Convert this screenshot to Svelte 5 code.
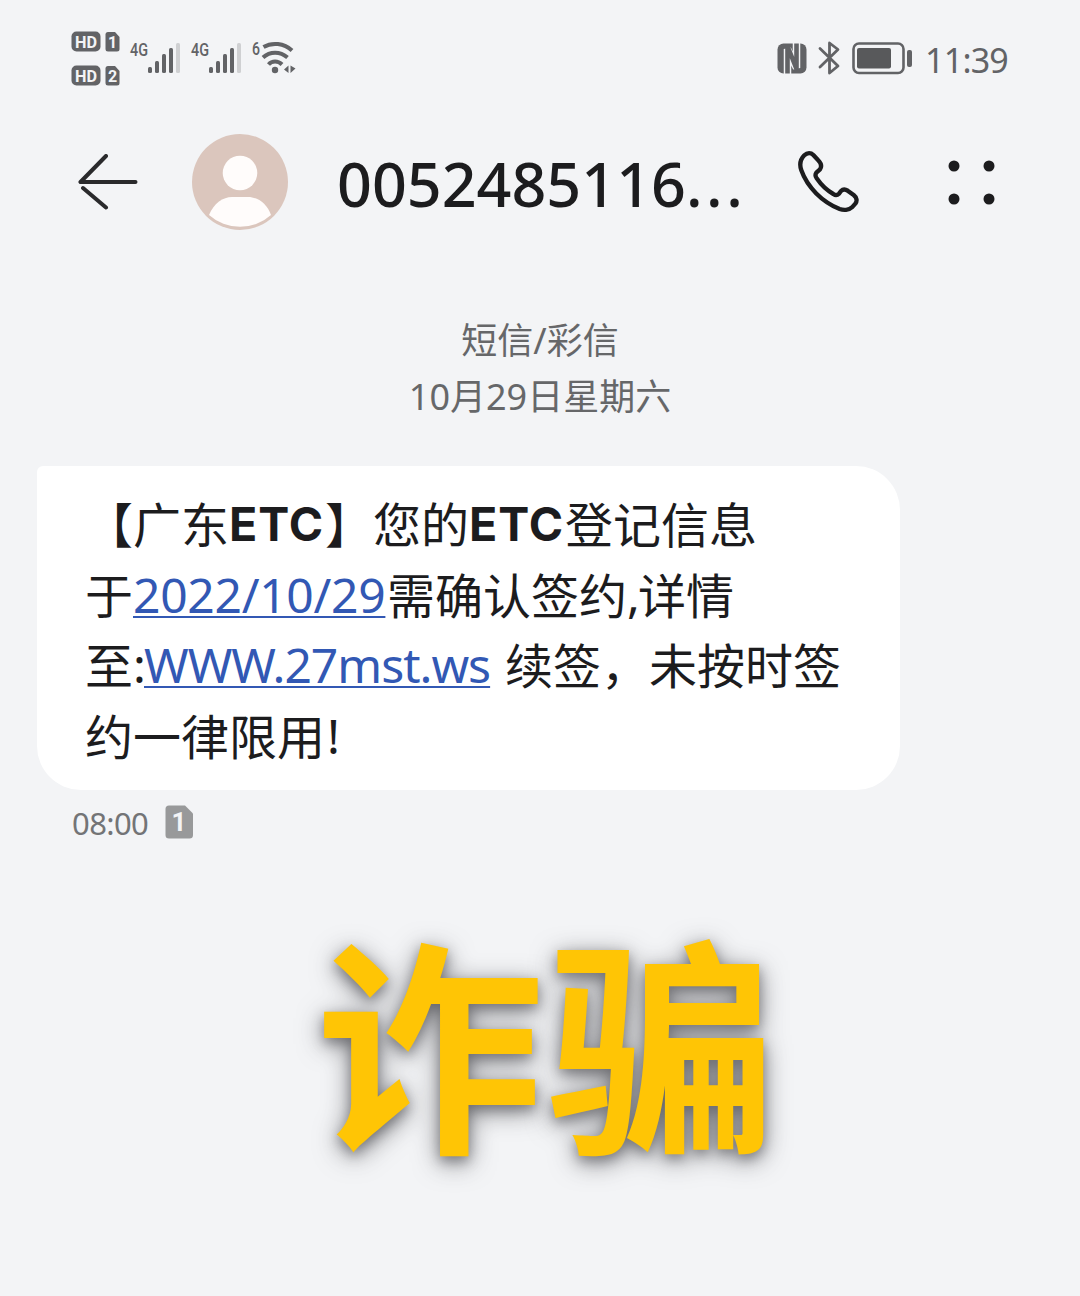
<script>
	// SIGNAL BARS, LAST ONE IS THE EMPTY LEVEL
	let bars = [
		{x: 18, h: 6}, {x: 25, h: 12}, {x: 32, h: 19},
		{x: 39, h: 25}, {x: 46, h: 30},
	]
	let sims = [1, 2];
	let dots = [
		{x: 6, y: 6}, {x: 41, y: 6},
		{x: 6, y: 39}, {x: 41, y: 39},
	]

	// MESSAGE IS SPLIT INTO LINES, EACH LINE INTO RUNS
	let lines = [
		[
			{kind: "han", text: "【广东"}, {kind: "strong", text: "ETC"},
			{kind: "han", text: "】您的"}, {kind: "strong", text: "ETC"},
			{kind: "han", text: "登记信息"},
		],
		[
			{kind: "han", text: "于"}, {kind: "date", text: "2022/10/29"},
			{kind: "han", text: "需确认签约"}, {kind: "mark", text: ","},
			{kind: "han", text: "详情"},
		],
		[
			{kind: "han", text: "至"}, {kind: "mark", text: ":"},
			{kind: "site", text: "WWW.27mst.ws"},
			{kind: "han after", text: "续签，未按时签"},
		],
		[
			{kind: "han", text: "约一律限用"}, {kind: "mark bang", text: "!"},
		],
	]
</script>

<main>
	<div class="status">
		<div class="hd">
			{#each sims as sim}
				<svg width="49" height="21" viewBox="0 0 49 21">
					<rect x="0.5" y="0.5" width="29" height="20" rx="5" fill="#626366" />
					<text class="hd-text" x="15" y="16.5" textLength="22" lengthAdjust="spacingAndGlyphs">HD</text>
					<path d="M37 1H44L48.5 6V18Q48.500 20.500 46 20.500H37Q34.500 20.500 34.500 18V3.500Q34.500 1 37 1Z" fill="#626366" />
					<text class="hd-text" x="41.500" y="16.500">{sim}</text>
				</svg>
			{/each}
		</div>
		{#each sims as sim}
			<svg class="signal" width="55" height="43" viewBox="-4 -9 55 43">
				<text class="net" x="0" y="16" textLength="18" lengthAdjust="spacingAndGlyphs">4G</text>
				{#each bars as bar, index}
					<rect x={bar.x} y={33 - bar.h} width="4" height={bar.h} rx="1.5" fill={index === 4 ? '#cfd0d2' : '#626366'} />
				{/each}
			</svg>
		{/each}
		<svg class="signal" width="50" height="43" viewBox="-4 -9 50 43">
			<text class="net" x="0" y="15" textLength="8" lengthAdjust="spacingAndGlyphs">6</text>
			<g fill="none" stroke="#626366" stroke-width="4">
				<path d="M11.500 7C20 2 32 3 40 10.500" />
				<path d="M11 17.500C18 11 28 11 35.500 17.500" />
				<path d="M16.500 24.500C20 20.500 26 20.500 30 24.500" />
			</g>
			<circle cx="23" cy="30" r="3.200" fill="#626366" />
			<path d="M36.500 25.500V33L32 29.500ZM38.500 25.500V33L43.500 28.500Z" fill="#626366" />
		</svg>
		<div class="right">
			<svg width="30" height="31" viewBox="0 0 30 31">
				<rect x="0.500" y="0.500" width="29" height="30" rx="6" fill="#626366" />
				<path d="M10.500 32V6L19.500 25V-1" fill="none" stroke="#f3f4f6" stroke-width="7.500" />
				<path d="M10.500 30.500V3L19.500 26V0.500" fill="none" stroke="#626366" stroke-width="4.600" />
			</svg>
			<svg class="bt" width="22" height="34" viewBox="0 0 22 34">
				<path d="M2 7.500L20 25L11.500 32V2L20 8.500L2 26" fill="none" stroke="#626366" stroke-width="2.800" stroke-linejoin="round" stroke-linecap="round" />
			</svg>
			<svg class="battery" width="60" height="33" viewBox="0 0 60 33">
				<rect x="1.500" y="1.500" width="50" height="29.500" rx="5.500" fill="none" stroke="#626366" stroke-width="2.600" />
				<rect x="5" y="6" width="34" height="20.500" rx="2" fill="#58595b" />
				<rect x="55" y="8" width="5" height="17" rx="2" fill="#626366" />
			</svg>
			<span class="clock">11:39</span>
		</div>
	</div>

	<header>
		<svg class="back" width="60" height="56" viewBox="0 0 60 56">
			<path d="M28 2L2.500 28H57.500M5 34L28 53.500" fill="none" stroke="#2a2a2c" stroke-width="4" stroke-linejoin="round" stroke-linecap="round" />
		</svg>
		<svg class="avatar" width="96" height="96" viewBox="0 0 96 96">
			<circle cx="48" cy="48" r="48" fill="#dbc6bd" />
			<circle cx="48" cy="39" r="17.300" fill="#fffcfb" />
			<path d="M17 81C22 69 31 63 40 63H56C66 63 75 70 79 81A46.500 46.500 0 0 1 17 81Z" fill="#fffcfb" />
		</svg>
		<h1>0052485116<span>...</span></h1>
		<svg width="64" height="64" viewBox="410 90 192 192">
			<path d="M432 106C441 97 452 98 459 105L473 120C483 130 485 139 479 148L468 158C464 164 464 168 469 175C482 194 499 211 519 222C526 227 531 226 536 221L542 213C548 207 556 208 562 212L580 225C590 233 591 243 585 251L575 262C566 271 549 271 538 267C486 246 441 202 423 151C417 134 420 118 432 106Z" fill="none" stroke="#1c1c1e" stroke-width="13" stroke-linejoin="round" />
		</svg>
		<svg class="more" width="47" height="45" viewBox="0 0 47 45">
			{#each dots as dot}
				<circle cx={dot.x} cy={dot.y} r="5.500" fill="#1c1c1e" />
			{/each}
		</svg>
	</header>

	<div class="day">
		<p>短信/彩信</p>
		<p>10月29日星期六</p>
	</div>

	<div class="bubble">
		{#each lines as line}
			<div class="line">
				{#each line as run}<span class={run.kind}>{run.text}</span>{/each}
			</div>
		{/each}
	</div>

	<div class="sent">
		<span>08:00</span>
		<svg width="28" height="34" viewBox="0 0 28 34">
			<path d="M4 0.500H20L28 8.500V30Q28 33.500 24.500 33.500H4Q0.500 33.500 0.500 30V4Q0.500 0.500 4 0.500Z" fill="#98999a" />
			<text class="sim-text" x="14" y="26">1</text>
		</svg>
	</div>

	<div class="stamp">诈骗</div>
</main>

<style>
	:global(body) {
		background: #f3f4f6;
	}

	main {
		width: 1080px;
		height: 1296px;
		overflow: hidden;
		background: #f3f4f6;
		font-family: "Noto Sans", "Noto Sans CJK SC", sans-serif;
		color: #1c1c1e;
	}

	svg {
		display: block;
		flex: none;
	}

	.status {
		display: flex;
		align-items: flex-start;
		box-sizing: border-box;
		height: 120px;
		padding: 31px 72px 0 71px;
	}

	.hd {
		display: flex;
		flex-direction: column;
		gap: 13px;
	}

	.hd-text {
		font: bold 16px "Roboto", sans-serif;
		fill: #f3f4f6;
		text-anchor: middle;
	}

	.net {
		font: 500 19px "Roboto", sans-serif;
		fill: #626366;
	}

	.signal {
		margin-left: 6px;
	}

	.right {
		display: flex;
		align-items: center;
		height: 54px;
		margin-left: auto;
	}

	.bt {
		margin-left: 11px;
	}

	.battery {
		margin-left: 12px;
	}

	.clock {
		margin: 3px 0 0 13px;
		font-size: 34px;
		line-height: 54px;
		letter-spacing: -0.8px;
		color: #626366;
	}

	header {
		display: flex;
		align-items: center;
		box-sizing: border-box;
		height: 124px;
		padding-left: 78px;
	}

	.avatar {
		margin-left: 54px;
	}

	h1 {
		width: 460px;
		margin: 3px 0 0 49px;
		font-size: 61px;
		font-weight: 500;
		line-height: 80px;
		letter-spacing: 0;
		white-space: nowrap;
	}

	h1 span {
		letter-spacing: 3.6px;
	}

	.more {
		margin-left: 87px;
	}

	.day {
		padding-top: 69px;
		text-align: center;
		color: #666769;
	}

	.day p {
		margin: 0;
		font-size: 36px;
		line-height: 55.5px;
	}

	.bubble {
		box-sizing: border-box;
		width: 863px;
		height: 324px;
		margin: 42px 0 0 37px;
		padding: 23px 0 0 48px;
		border-radius: 6px 44px 44px 44px;
		background: #fff;
	}

	.line {
		display: flex;
		height: 70.6px;
		font-size: 48px;
		line-height: 70px;
		white-space: pre;
	}

	.han {
		font-family: "Noto Sans CJK SC", sans-serif;
		line-height: 66px;
		text-spacing-trim: space-all;
	}

	.strong {
		width: 96px;
		font-family: "Inter", sans-serif;
		font-weight: 700;
		font-size: 46.5px;
		letter-spacing: 1px;
	}

	.date,
	.site {
		color: #3258b4;
		text-decoration: underline;
		text-decoration-thickness: 2px;
		text-underline-offset: 3px;
		text-decoration-skip-ink: none;
	}

	.date {
		width: 254px;
		letter-spacing: -0.3px;
	}

	.site {
		width: 346px;
		letter-spacing: -1px;
	}

	.mark {
		width: 11px;
	}

	.bang {
		margin-left: 2px;
	}

	.after {
		margin-left: 15px;
	}

	.sent {
		display: flex;
		align-items: center;
		gap: 17px;
		height: 34px;
		padding: 15px 0 0 72px;
	}

	.sent span {
		padding-top: 2px;
		font-size: 31px;
		line-height: 34px;
		letter-spacing: -0.6px;
		color: #737476;
	}

	.sim-text {
		font: bold 26px "Roboto", sans-serif;
		fill: #f3f4f6;
		text-anchor: middle;
	}

	.stamp {
		margin-top: 47px;
		padding-left: 315px;
		font-family: "Noto Sans CJK SC", sans-serif;
		font-size: 229px;
		font-weight: 700;
		line-height: 300px;
		letter-spacing: 3px;
		color: #ffc505;
		text-shadow: 0 6px 26px rgba(50, 50, 55, 0.6), 0 5px 12px rgba(60, 60, 65, 0.4);
	}
</style>
